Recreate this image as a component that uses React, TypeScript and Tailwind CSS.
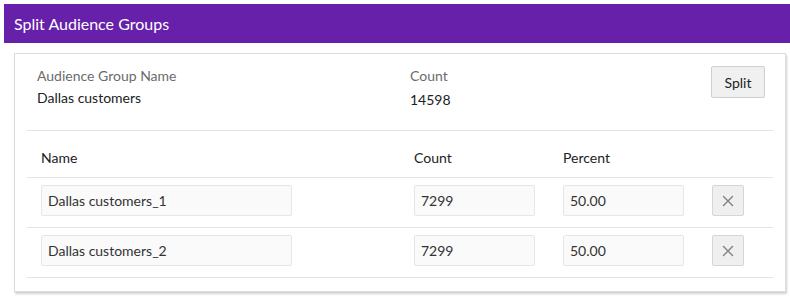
import React from 'react';

const rows = [
  { name: 'Dallas customers_1', count: '7299', percent: '50.00' },
  { name: 'Dallas customers_2', count: '7299', percent: '50.00' },
];

const cols = 'grid grid-cols-[373px_149px_149px_76px]';

const CloseIcon = () => (
  <svg width="12" height="12" viewBox="0 0 12 12" fill="none" stroke="#808080" strokeWidth="1.4" strokeLinecap="round">
    <path d="M1.5 1.5 L10.5 10.5 M10.5 1.5 L1.5 10.5" />
  </svg>
);

export default function App() {
  return (
    <div className="w-[790px] h-[296px] bg-white pt-1 pl-1 font-['Lato','Noto_Sans',sans-serif] text-[14px] text-[#222]">
      <div className="h-[39px] bg-[#6620a9] text-white text-[16px] flex items-center pl-[10px]">
        Split Audience Groups
      </div>

      {/* card */}
      <div className="mt-[10px] ml-[10px] w-[772px] border border-[#dcdcdc] shadow-[1px_2px_2px_rgba(0,0,0,0.18)] px-[12px] pb-[13px]">
        <div className="grid grid-cols-[373px_1fr_auto] pt-[12px] pb-[20px] border-b border-[#e3e3e3]">
          <div className="pl-[10px]">
            <div className="text-[#6b6b6b] leading-[20px]">Audience Group Name</div>
            <div className="mt-[2px] leading-[20px]">Dallas customers</div>
          </div>
          <div className="pl-[10px]">
            <div className="text-[#6b6b6b] leading-[20px]">Count</div>
            <div className="mt-[4px] leading-[20px]">14598</div>
          </div>
          <div className="pr-[8px]">
            <button className="h-[32px] w-[54px] bg-[#f0f0f0] border border-[#cfcfcf] rounded-[2px] text-[#222]">
              Split
            </button>
          </div>
        </div>

        <div className={`${cols} pt-[17px] pb-[9px] border-b border-[#e3e3e3] leading-[20px]`}>
          <div className="pl-[14px]">Name</div>
          <div className="pl-[14px]">Count</div>
          <div className="pl-[14px]">Percent</div>
          <div />
        </div>

        {rows.map((r) => (
          <div key={r.name} className={`${cols} items-start pt-[7px] pb-[11px] border-b border-[#e3e3e3]`}>
            <div className="pl-[14px]">
              <div className="w-[251px] h-[31px] bg-[#fafafa] border border-[#e6e6e6] rounded-[2px] flex items-center px-[6px] text-[#333]">
                {r.name}
              </div>
            </div>
            <div className="pl-[14px]">
              <div className="w-[121px] h-[31px] bg-[#fafafa] border border-[#e6e6e6] rounded-[2px] flex items-center px-[6px] text-[#333]">
                {r.count}
              </div>
            </div>
            <div className="pl-[14px]">
              <div className="w-[121px] h-[31px] bg-[#fafafa] border border-[#e6e6e6] rounded-[2px] flex items-center px-[6px] text-[#333]">
                {r.percent}
              </div>
            </div>
            <div className="pl-[14px]">
              <button className="w-[32px] h-[31px] bg-[#efefef] border border-[#d6d6d6] rounded-[2px] flex items-center justify-center">
                <CloseIcon />
              </button>
            </div>
          </div>
        ))}
      </div>
    </div>
  );
}
